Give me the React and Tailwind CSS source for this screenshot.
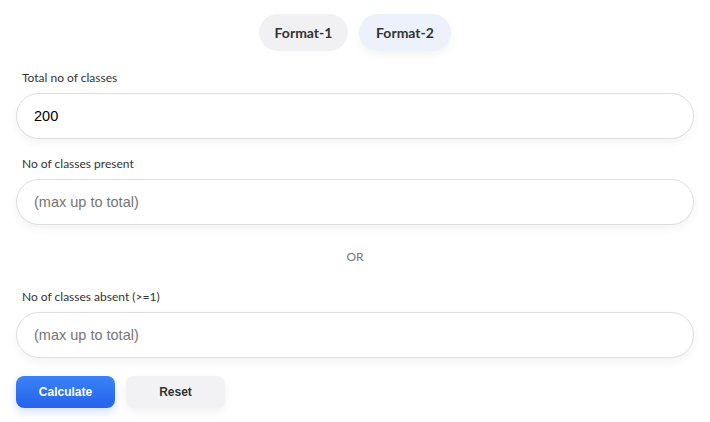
import React, { useState } from 'react';

const fieldClass =
  "w-full h-[46px] rounded-full border border-[#dedede] bg-white px-[17px] text-[14.5px] text-black placeholder:text-[#757575] shadow-[0_4px_10px_rgba(0,0,0,0.05)] outline-none font-['Liberation_Sans',Arial,sans-serif]";

const Field = ({ label, value, onChange, placeholder, className }) => (
  <div className={className}>
    <label className="block pl-[6px] text-[12px] leading-4 text-[#333] font-['Lato',sans-serif]">
      {label}
    </label>
    <input
      type="text"
      value={value}
      onChange={onChange}
      placeholder={placeholder}
      className={`mt-[7px] ${fieldClass}`}
    />
  </div>
);

export default function App() {
  const [format, setFormat] = useState(2);
  const [total, setTotal] = useState('200');
  const [present, setPresent] = useState('');
  const [absent, setAbsent] = useState('');

  const handleReset = () => {
    setTotal('');
    setPresent('');
    setAbsent('');
  };

  return (
    <div className="min-h-screen bg-white px-4 pt-[14px] font-['Lato',sans-serif]">
      {/* Format switch */}
      <div className="flex justify-center gap-[11px]">
        <button
          onClick={() => setFormat(1)}
          className={`h-[37px] w-[89px] rounded-full text-[14px] font-bold text-[#333] ${
            format === 1 ? 'bg-[#edf1fb] shadow-[0_4px_10px_rgba(0,0,0,0.05)]' : 'bg-[#f1f1f3]'
          }`}
        >
          Format-1
        </button>
        <button
          onClick={() => setFormat(2)}
          className={`h-[37px] w-[92px] rounded-full text-[14px] font-bold text-[#333] ${
            format === 2 ? 'bg-[#edf1fb] shadow-[0_4px_10px_rgba(0,0,0,0.05)]' : 'bg-[#f1f1f3]'
          }`}
        >
          Format-2
        </button>
      </div>

      <Field
        className="mt-[19px]"
        label="Total no of classes"
        value={total}
        onChange={(e) => setTotal(e.target.value)}
      />
      <Field
        className="mt-[17px]"
        label="No of classes present"
        value={present}
        onChange={(e) => setPresent(e.target.value)}
        placeholder="(max up to total)"
      />

      <div className="mt-[22px] text-center text-[12px] leading-5 text-[#777]">OR</div>

      <Field
        className="mt-[22px]"
        label="No of classes absent (>=1)"
        value={absent}
        onChange={(e) => setAbsent(e.target.value)}
        placeholder="(max up to total)"
      />

      <div className="mt-[18px] flex gap-[11px] font-['Liberation_Sans',Arial,sans-serif]">
        <button className="h-[32px] w-[99px] rounded-lg bg-gradient-to-b from-[#3b82f6] to-[#2563eb] text-[12px] font-bold text-white shadow-[0_4px_10px_rgba(37,99,235,0.2)]">
          Calculate
        </button>
        <button
          onClick={handleReset}
          className="h-[32px] w-[99px] rounded-lg bg-[#f2f2f4] text-[12px] font-bold text-[#333] shadow-[0_4px_10px_rgba(0,0,0,0.06)]"
        >
          Reset
        </button>
      </div>
    </div>
  );
}
